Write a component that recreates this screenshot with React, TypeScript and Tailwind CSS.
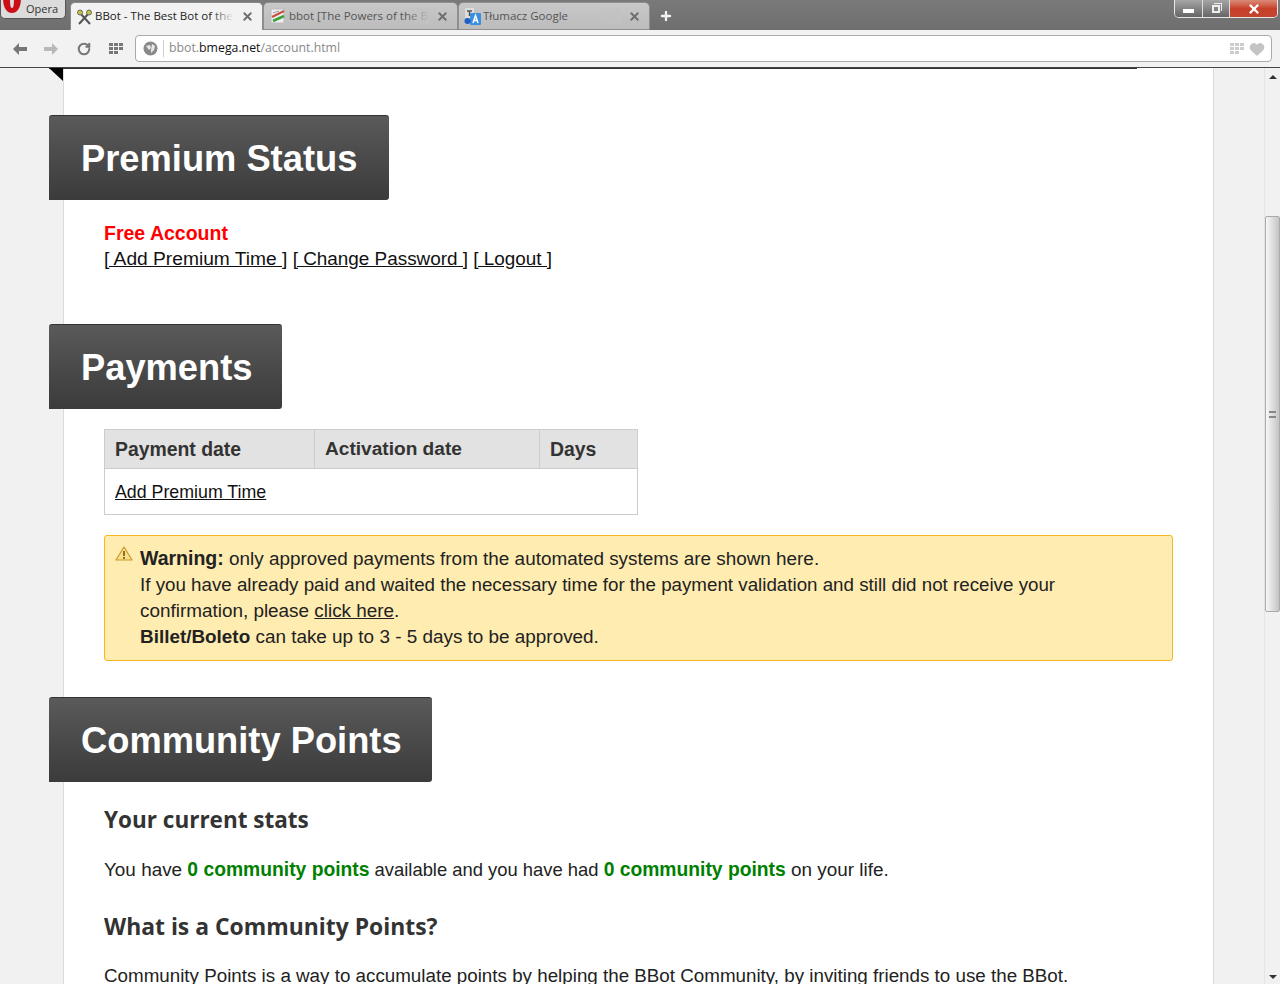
import { RotateCw, X, Plus, Heart } from "lucide-react";

function GridIcon({ className }: { className: string }) {
  return (
    <svg width="14" height="11" viewBox="0 0 14 11" className={className} fill="currentColor">
      <rect x="0" y="0" width="4" height="3" />
      <rect x="5" y="0" width="4" height="3" />
      <rect x="10" y="0" width="4" height="3" />
      <rect x="0" y="4" width="4" height="3" />
      <rect x="5" y="4" width="4" height="3" />
      <rect x="10" y="4" width="4" height="3" />
      <rect x="0" y="8" width="4" height="3" />
      <rect x="5" y="8" width="4" height="3" />
    </svg>
  );
}

function BBotIcon() {
  return (
    <svg width="17" height="16" viewBox="0 0 17 16" className="shrink-0">
      <path d="M4 4 L14 15 M13 4 L3 15" stroke="#555" strokeWidth="2" />
      <circle cx="4" cy="3.500" r="2.500" fill="#c9c23a" stroke="#666" strokeWidth="1" />
      <circle cx="13" cy="3.500" r="2.500" fill="#c9c23a" stroke="#666" strokeWidth="1" />
    </svg>
  );
}

function WikiIcon() {
  return (
    <svg width="18" height="16" viewBox="-1 0 18 16" className="shrink-0">
      <rect x="1" y="1" width="13" height="14" fill="#eee" stroke="#bbb" />
      <path d="M2 9 L14 3" stroke="#c8503c" strokeWidth="2" />
      <path d="M3 13 L14 8" stroke="#3aa03a" strokeWidth="2.500" />
      <path d="M3 5 L9 3" stroke="#99b" strokeWidth="1" />
    </svg>
  );
}

function TranslateIcon() {
  return (
    <svg width="17" height="17" viewBox="0 0 17 17" className="shrink-0">
      <rect x="1" y="0" width="9" height="10" fill="#ddd" />
      <path d="M3 3 H8 M5.500 3 V8" stroke="#555" strokeWidth="1.500" />
      <rect x="6" y="5" width="11" height="12" rx="1" fill="#3b8fe0" />
      <path d="M9 15 L11.500 7.500 L14 15 M10 12.500 H13" stroke="#fff" strokeWidth="1.500" fill="none" />
      <circle cx="3.500" cy="13" r="3" fill="#1c5fc4" />
    </svg>
  );
}

function BrowserTab({ title, icon, active, width }: { title: string; icon: React.ReactNode; active?: boolean; width: string }) {
  return (
    <div
      className={`${width} flex h-full items-center gap-[2px] rounded-t-[5px] border pl-[5px] pr-[8px] ${
        active ? "border-b-0 border-[#8a8a8a] bg-[#f2f2f2] text-[#222]" : "border-[#8f8f8f] bg-gradient-to-b from-[#c8c8c8] to-[#bcbcbc] text-[#555]"
      }`}
    >
      {icon}
      <div className="relative -mt-px min-w-0 flex-1 overflow-hidden whitespace-nowrap font-['Open_Sans',sans-serif] text-[11.500px] leading-[16px]">
        {title}
        <div className={`absolute inset-y-0 right-0 w-6 bg-gradient-to-r from-transparent ${active ? "to-[#f2f2f2]" : "to-[#c2c2c2]"}`} />
      </div>
      <X size={13} strokeWidth={3.500} className="ml-[5px] shrink-0 text-[#6e6e6e]" />
    </div>
  );
}

function BrowserChrome() {
  return (
    <div className="shrink-0">
      <div className="flex h-[30px] items-start bg-gradient-to-b from-[#7a7a7a] to-[#6e6e6e]">
        <div className="flex h-[19px] w-[66px] items-center overflow-hidden rounded-b-[5px] border border-t-0 border-[#555] bg-[#dcdcdc]">
          <svg width="22" height="18" viewBox="0 0 22 18" className="shrink-0 -translate-y-[2px]">
            <path d="M2 0 C2 10 6 15 11 15 C16 15 20 10 20 0 H13 C13 7 12.500 10 11 10 C9.500 10 9 7 9 0 Z" fill="#cc0f16" />
          </svg>
          <span className="ml-[3px] font-['Open_Sans',sans-serif] text-[11px] leading-[16px] text-[#333]">Opera</span>
        </div>
        <div className="ml-[4px] mt-[2px] flex h-[28px]">
          <BrowserTab title="BBot - The Best Bot of the Wo" icon={<BBotIcon />} active width="w-[193px]" />
          <BrowserTab title="bbot [The Powers of the Bot]" icon={<WikiIcon />} width="w-[195px]" />
          <BrowserTab title="Tłumacz Google" icon={<TranslateIcon />} width="w-[192px]" />
        </div>
        <Plus size={14} strokeWidth={4} className="ml-[9px] mt-[9px] text-[#f2f2f2]" />
        <div className="ml-auto mr-[2px] flex h-[18px] w-[104px] overflow-hidden rounded-b-[5px] border border-t-0 border-[#e8e8e8]">
          <div className="flex w-[28px] items-center justify-center border-r border-[#ddd] bg-gradient-to-b from-[#a5a5a5] to-[#666]">
            <div className="mt-[4px] h-[4px] w-[11px] bg-white" />
          </div>
          <div className="flex w-[27px] items-center justify-center border-r border-[#ddd] bg-gradient-to-b from-[#a5a5a5] to-[#666]">
            <div className="relative h-[8px] w-[8px] border-2 border-[#eee]">
              <div className="absolute -right-[4px] -top-[4px] h-[8px] w-[8px] border-r border-t border-[#eee]" />
            </div>
          </div>
          <div className="flex flex-1 items-center justify-center bg-gradient-to-b from-[#d98a78] via-[#c8402a] to-[#c4442f]">
            <X size={14} strokeWidth={4} className="text-white" />
          </div>
        </div>
      </div>
      <div className="flex h-[38px] items-center border-b border-[#444] bg-[#f2f2f2] pr-[8px]">
        <svg width="16" height="14" viewBox="0 0 16 14" className="ml-[12px] text-[#777]" fill="currentColor">
          <path d="M7 1 L1 7 L7 13 V9 H15 V5 H7 Z" />
        </svg>
        <svg width="16" height="14" viewBox="0 0 16 14" className="ml-[15px] text-[#b8b8b8]" fill="currentColor">
          <path d="M9 1 L15 7 L9 13 V9 H1 V5 H9 Z" />
        </svg>
        <RotateCw size={14} strokeWidth={3.500} className="ml-[18px] text-[#777]" />
        <GridIcon className="ml-[18px] text-[#777]" />
        <div className="ml-[12px] flex h-[27px] flex-1 items-center rounded-[4px] border border-[#aaa] bg-white">
          <svg width="15" height="15" viewBox="0 0 15 15" className="ml-[7px]">
            <circle cx="7.500" cy="7.500" r="7" fill="#8a8a8a" />
            <path d="M3 5 L7 4 L8 7 L6 9 Z M9 3 L12 5 L11 9 L8 12 L8 9 Z" fill="#e8e8e8" />
          </svg>
          <div className="ml-[5px] h-[17px] w-px bg-[#ccc]" />
          <span className="-mt-px ml-[5px] font-['Open_Sans',sans-serif] text-[12.300px] leading-[18px] text-[#888]">
            bbot.<span className="text-[#111]">bmega.net</span>/account.html
          </span>
          <GridIcon className="ml-auto text-[#ccc]" />
          <Heart size={16} fill="#c4c4c4" strokeWidth={0} className="ml-[5px] mr-[6px] scale-110" />
        </div>
      </div>
    </div>
  );
}

function SectionTitle({ children, width }: { children: React.ReactNode; width: string }) {
  return (
    <div
      className={`${width} relative z-10 -ml-[15px] flex h-[85px] items-center whitespace-nowrap rounded-r-[3px] rounded-t-[3px] border-t border-[#333] bg-gradient-to-b from-[#5a5a5a] to-[#3b3b3b] pl-[32px] pt-[1px] text-[36.300px] font-bold text-white`}
    >
      {children}
    </div>
  );
}

function Scrollbar() {
  return (
    <div className="flex w-[16px] shrink-0 flex-col items-center border-l border-[#e4e4e4] bg-[#f1f1f1]">
      <div className="mt-[7px] h-0 w-0 border-x-[4px] border-b-[4px] border-x-transparent border-b-[#333]" />
      <div className="mt-[137px] flex h-[396px] w-[15px] items-center justify-center rounded-[2px] border border-[#aaa] bg-gradient-to-r from-[#f8f8f8] to-[#c4c4c4]">
        <div className="h-[7px] w-[7px] border-y-2 border-[#888]" />
      </div>
      <div className="mt-auto mb-[5px] h-0 w-0 border-x-[4px] border-t-[4px] border-x-transparent border-t-[#333]" />
    </div>
  );
}

export default function App() {
  return (
    <div className="flex h-[984px] flex-col overflow-hidden bg-[#f1f1f1] font-['Liberation_Sans',Arial,sans-serif]">
      <BrowserChrome />

      <div className="flex min-h-0 flex-1">
        <div className="w-[63px] shrink-0" />

        <main className="relative w-[1151px] shrink-0 border-x border-[#dcdcdc] bg-white pr-[40px] text-[18.900px] leading-[26px] text-[#222]">
          <div className="-ml-[15px] h-px w-[1088px] bg-[#333]" />
          <div className="pt-[46px]">
            <SectionTitle width="w-[340px]">Premium Status</SectionTitle>
          </div>

          <div className="pl-[40px] pt-[20px]">
            <div className="text-[19.500px] font-bold text-[#ff0000]">Free Account</div>
            <div className="whitespace-nowrap text-[#111]">
              <a className="text-[19.200px] leading-none underline">[ Add Premium Time ]</a> <a className="underline">[ Change Password ]</a>{" "}
              <a className="underline">[ Logout ]</a>
            </div>
          </div>

          <div className="pt-[52px]">
            <SectionTitle width="w-[233px]">Payments</SectionTitle>
          </div>

          <div className="pl-[40px] pt-[20px]">
            <table className="w-[534px] table-fixed border-collapse border border-[#ccc]">
              <thead>
                <tr className="h-[39px] border-b border-[#ccc] bg-[#e2e2e2] text-left text-[19.400px] text-[#333]">
                  <th className="w-[210px] border-r border-[#ccc] pl-[10px] font-bold">Payment date</th>
                  <th className="w-[225px] border-r border-[#ccc] pl-[10px] text-[19.100px] font-bold">Activation date</th>
                  <th className="pl-[10px] font-bold">Days</th>
                </tr>
              </thead>
              <tbody>
                <tr className="h-[46px]">
                  <td colSpan={3} className="pl-[10px]">
                    <a className="text-[17.800px] text-[#111] underline">Add Premium Time</a>
                  </td>
                </tr>
              </tbody>
            </table>

            <div className="relative mt-[20px] rounded-[3px] border border-[#f5b81f] bg-[#ffecb0] pb-[10px] pl-[35px] pr-[100px] pt-[10px]">
              <svg width="18" height="15" viewBox="0 0 18 15" className="absolute left-[10px] top-[10px]">
                <path d="M9 1 L17 14 H1 Z" fill="#fbe08a" stroke="#c99a2e" strokeWidth="1.200" strokeLinejoin="round" />
                <path d="M9 5 V10 M9 11 V13" stroke="#6b4a10" strokeWidth="1.500" />
              </svg>
              <div>
                <b className="text-[19.500px] leading-none">Warning:</b> only approved payments from the automated systems are shown here.
              </div>
              <div>
                <span className="text-[18.750px] leading-none">
                  If you have already paid and waited the necessary time for the payment validation and still did not receive your
                </span>{" "}
                confirmation, please <a className="underline">click here</a>.
              </div>
              <div>
                <b>Billet/Boleto</b> can take up to 3 - 5 days to be approved.
              </div>
            </div>
          </div>

          <div className="pt-[36px]">
            <SectionTitle width="w-[383px]">Community Points</SectionTitle>
          </div>

          <div className="pl-[40px]">
            <h3 className="pt-[22px] font-['Open_Sans',sans-serif] text-[22.500px] font-bold leading-[32px] text-[#333]">Your current stats</h3>
            <p className="pt-[21px]">
              You have <b className="text-[19.300px] leading-none text-[#008000]">0 community points</b>
              <span className="text-[18.400px] leading-none"> available and you have had </span>
              <b className="text-[19.300px] leading-none text-[#008000]">0 community points</b> on your life.
            </p>
            <h3 className="pt-[28px] font-['Open_Sans',sans-serif] text-[22.900px] font-bold leading-[32px] text-[#333]">What is a Community Points?</h3>
            <p className="pt-[20px] text-[18.800px]">
              Community Points is a way to accumulate points by helping the BBot Community, by inviting friends to use the BBot.
            </p>
          </div>

          <div className="absolute -left-[15px] top-0 h-0 w-0 border-l-[14px] border-t-[13px] border-l-transparent border-t-black" />
        </main>

        <div className="flex-1" />
        <Scrollbar />
      </div>
    </div>
  );
}
